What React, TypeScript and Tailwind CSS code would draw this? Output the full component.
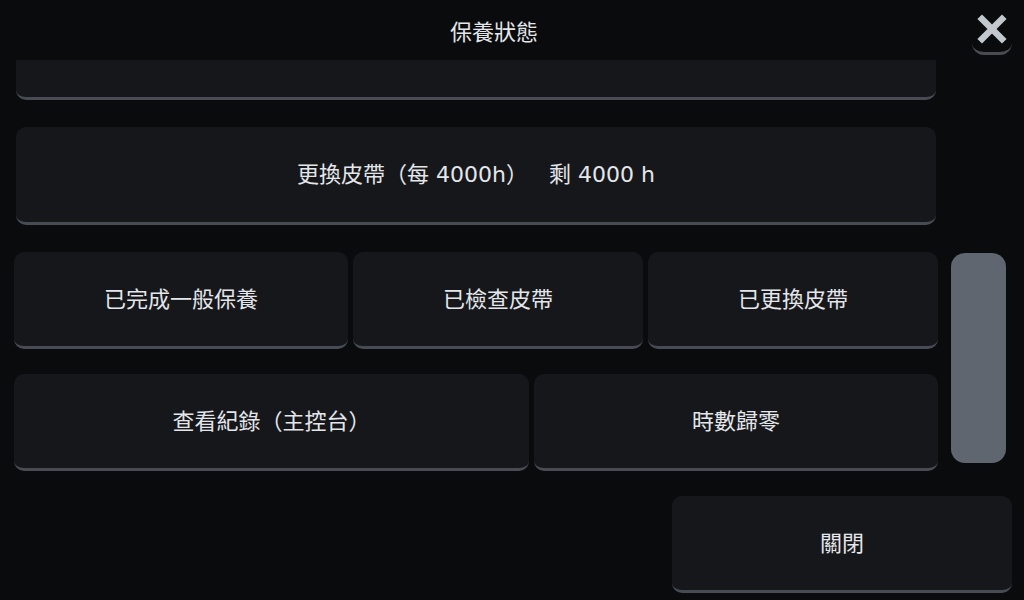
import React from "react";

const FONT = {
    fontFamily: '"DejaVu Sans", "Noto Sans CJK TC", sans-serif',
};

/* 共用按鈕外觀 */
const CARD =
    "flex items-center justify-center rounded-[10px] bg-[#16171b] border-b-[3px] border-[#474b54] text-[22px] text-[#e4e6ea]";

function CloseIcon(): React.ReactElement {
    return (
        <svg width="30" height="30" viewBox="0 0 30 30">
            <path
                d="M5 5 L25 25 M25 5 L5 25"
                stroke="#c3c7ce"
                strokeWidth="6.5"
                strokeLinecap="square"
                fill="none"
            />
        </svg>
    );
}

export default function App(): React.ReactElement {
    return (
        <div
            className="w-[1024px] h-[600px] bg-[#0a0b0d] overflow-hidden flex flex-col"
            style={FONT}
        >
            {/* 標題列 */}
            <div className="h-[60px] flex items-start">
                <h1 className="w-[972px] pl-[16px] text-center text-[22px] text-[#e4e6ea] pt-[16px]">
                    保養狀態
                </h1>
                <button className="w-[40px] h-[50px] mt-[5px] flex items-center justify-center rounded-[12px] border-b-[3px] border-[#474b54]">
                    <CloseIcon />
                </button>
            </div>

            {/* 捲動區 */}
            <div className="h-[420px] flex">
                <div className="w-[924px] ml-[14px] h-full overflow-hidden">
                    <div className="-mt-[58px] flex flex-col">
                        <div className={`${CARD} h-[98px] mx-[2px]`}>
                            一般保養（每 500h）
                            <span className="inline-block w-[21px]" />
                            剩 500 h
                        </div>

                        <div className={`${CARD} h-[98px] mx-[2px] mt-[27px]`}>
                            更換皮帶（每 4000h）
                            <span className="inline-block w-[21px]" />
                            剩 4000 h
                        </div>

                        <div className="grid grid-cols-[334px_290px_290px] gap-[5px] mt-[27px]">
                            <button className={`${CARD} h-[97px]`}>已完成一般保養</button>
                            <button className={`${CARD} h-[97px]`}>已檢查皮帶</button>
                            <button className={`${CARD} h-[97px]`}>已更換皮帶</button>
                        </div>

                        <div className="grid grid-cols-[515px_404px] gap-[5px] mt-[25px]">
                            <button className={`${CARD} h-[97px]`}>查看紀錄（主控台）</button>
                            <button className={`${CARD} h-[97px]`}>時數歸零</button>
                        </div>
                    </div>
                </div>

                {/* 捲軸 */}
                <div className="w-[55px] ml-[13px] pt-[193px]">
                    <div className="h-[210px] rounded-[14px] bg-[#5f6670]" />
                </div>
            </div>

            {/* 底部 */}
            <div className="flex justify-end pr-[12px] pt-[16px]">
                <button className={`${CARD} w-[340px] h-[97px]`}>關閉</button>
            </div>
        </div>
    );
}
